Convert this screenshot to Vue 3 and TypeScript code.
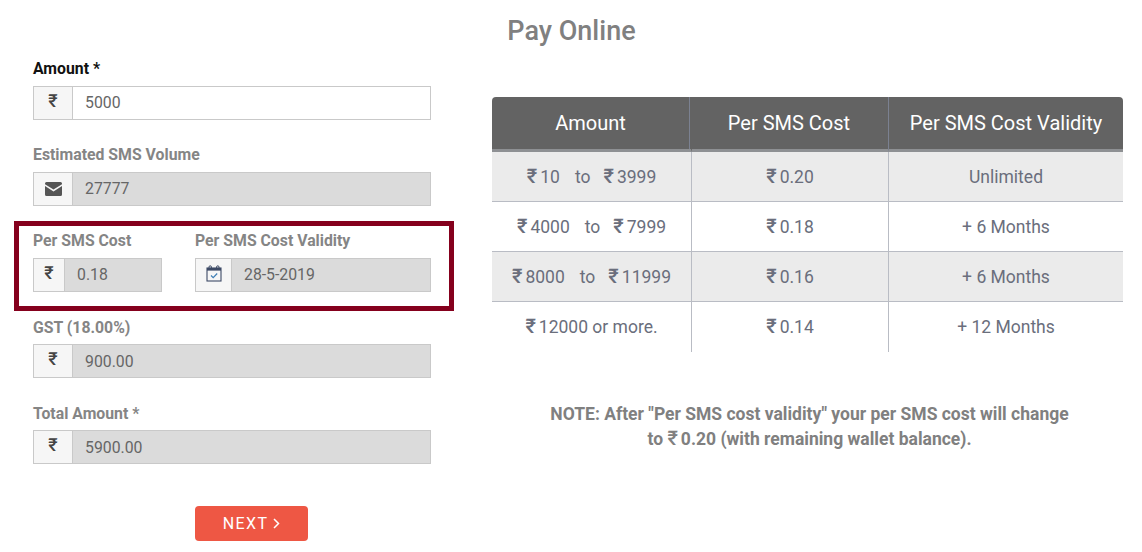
<script setup lang="ts">
interface Rate {
    from: string;
    to?: string;
    cost: string;
    validity: string;
}

const rates: Rate[] = [
    { from: '10', to: '3999', cost: '0.20', validity: 'Unlimited' },
    { from: '4000', to: '7999', cost: '0.18', validity: '+ 6 Months' },
    { from: '8000', to: '11999', cost: '0.16', validity: '+ 6 Months' },
    { from: '12000 or more.', cost: '0.14', validity: '+ 12 Months' },
];
</script>

<template>
    <main class="page">
        <h1 class="title">Pay Online</h1>
        <div class="columns">
            <form class="left" @submit.prevent>
                <div class="field">
                    <label class="dark">Amount *</label>
                    <div class="group">
                        <span class="addon wide rupee">₹</span>
                        <input class="control" value="5000" />
                    </div>
                </div>
                <div class="field volume">
                    <label>Estimated SMS Volume</label>
                    <div class="group">
                        <span class="addon wide">
                            <svg width="17" height="14" viewBox="0 0 17 14">
                                <path d="M1.5 0h14A1.5 1.5 0 0 1 17 1.5v.7L8.5 7.6 0 2.2v-.7A1.5 1.5 0 0 1 1.5 0z" fill="#555" />
                                <path d="M0 4l8.5 5.4L17 4v8.5a1.5 1.5 0 0 1-1.500 1.500h-14A1.500 1.500 0 0 1 0 12.500z" fill="#555" />
                            </svg>
                        </span>
                        <input class="control" value="27777" disabled />
                    </div>
                </div>
                <div class="highlight">
                    <div class="field cost">
                        <label>Per SMS Cost</label>
                        <div class="group">
                            <span class="addon narrow rupee">₹</span>
                            <input class="control" value="0.18" disabled />
                        </div>
                    </div>
                    <div class="field validity">
                        <label>Per SMS Cost Validity</label>
                        <div class="group">
                            <span class="addon medium calendar">
                                <svg width="16" height="17" viewBox="0 0 16 17" fill="none">
                                    <rect x="1" y="3" width="14" height="13" stroke="#3d4a66" stroke-width="1.100" />
                                    <rect x="1" y="3" width="14" height="2.600" fill="#3d4a66" />
                                    <path d="M3 3.500V2a1.200 1.200 0 0 1 2.400 0v1.500M10.600 3.500V2a1.200 1.200 0 0 1 2.400 0v1.500" stroke="#3d4a66" stroke-width="1" />
                                    <path d="M5 10.500l2.200 2.200L11.200 8.500" stroke="#3f7fb5" stroke-width="1.200" />
                                </svg>
                            </span>
                            <input class="control" value="28-5-2019" disabled />
                        </div>
                    </div>
                </div>
                <div class="field gst">
                    <label>GST (18.00%)</label>
                    <div class="group">
                        <span class="addon wide rupee">₹</span>
                        <input class="control" value="900.00" disabled />
                    </div>
                </div>
                <div class="field total">
                    <label>Total Amount *</label>
                    <div class="group">
                        <span class="addon wide rupee">₹</span>
                        <input class="control" value="5900.00" disabled />
                    </div>
                </div>
                <button class="next" type="submit">
                    NEXT
                    <svg width="7" height="11" viewBox="0 0 7 11" fill="none">
                        <path d="M1 1l4.500 4.500L1 10" stroke="#fff" stroke-width="1.500" />
                    </svg>
                </button>
            </form>
            <section class="right">
                <table class="rates">
                    <thead>
                        <tr>
                            <th>Amount</th>
                            <th>Per SMS Cost</th>
                            <th>Per SMS Cost Validity</th>
                        </tr>
                    </thead>
                    <tbody>
                        <tr v-for="rate in rates" :key="rate.from">
                            <td>
                                <template v-if="rate.to">
                                    <span class="rs">₹</span>{{ rate.from }}<span class="to">to</span><span class="rs">₹</span>{{ rate.to }}
                                </template>
                                <template v-else><span class="rs">₹</span>{{ rate.from }}</template>
                            </td>
                            <td><span class="rs">₹</span>{{ rate.cost }}</td>
                            <td>{{ rate.validity }}</td>
                        </tr>
                    </tbody>
                </table>
                <p class="note">
                    NOTE: After "Per SMS cost validity" your per SMS cost will change<br />
                    to <span class="rs">₹</span>0.20 (with remaining wallet balance).
                </p>
            </section>
        </div>
    </main>
</template>

<style scoped>
.page {
    width: 1142px;
    height: 552px;
    overflow: hidden;
    background: #fff;
    font-family: Roboto, "DejaVu Sans", sans-serif;
    box-sizing: border-box;
}

.title {
    margin: 0;
    height: 58px;
    padding: 14px 0 0 1px;
    box-sizing: border-box;
    text-align: center;
    font-size: 27px;
    line-height: 34px;
    font-weight: 500;
    color: #808080;
}

.columns {
    display: flex;
}

.left {
    width: 398px;
    margin-left: 33px;
    display: flex;
    flex-direction: column;
}

.field {
    display: flex;
    flex-direction: column;
    gap: 8px;
}

.field label {
    height: 20px;
    font-size: 15.8px;
    line-height: 22px;
    font-weight: 700;
    color: #858585;
    white-space: nowrap;
}

.field label.dark {
    color: #111;
}

.volume {
    margin-top: 24px;
}

.gst {
    margin-top: 6px;
    gap: 7px;
}

.total {
    margin-top: 25px;
    gap: 7px;
}

.gst .control,
.total .control {
    padding-bottom: 0;
}

.group {
    display: flex;
    height: 34px;
    border: 1px solid #c9c9c9;
    box-sizing: border-box;
}

.addon {
    flex: none;
    display: flex;
    align-items: center;
    justify-content: center;
    background: #f6f6f6;
    border-right: 1px solid #c9c9c9;
    box-sizing: border-box;
    color: #444;
}

.wide {
    width: 39px;
}

.narrow {
    width: 31px;
}

.medium {
    width: 36px;
}

.calendar {
    padding-bottom: 3px;
}

.rupee {
    font-size: 18px;
    font-weight: 500;
    padding-bottom: 5px;
}

.control {
    flex: 1;
    min-width: 0;
    width: 0;
    border: 0;
    padding: 0 12px 2px;
    margin: 0;
    font: 400 15.8px Roboto, sans-serif;
    color: #666;
    background: #fff;
    outline: none;
}

.control:disabled {
    background: #dbdbdb;
    color: #666;
    opacity: 1;
    -webkit-text-fill-color: #666;
}

.highlight {
    display: flex;
    gap: 33px;
    width: 440px;
    height: 90px;
    margin: 15px 0 0 -19px;
    padding: 4px 18px 0 14px;
    border: 5px solid #85001d;
    box-sizing: border-box;
}

.cost {
    width: 129px;
    flex: none;
}

.validity {
    flex: 1;
    min-width: 0;
}

.next {
    align-self: flex-start;
    display: flex;
    align-items: center;
    justify-content: center;
    gap: 5px;
    width: 113px;
    height: 35px;
    margin: 42px 0 0 162px;
    padding: 0;
    border: 0;
    border-radius: 4px;
    background: #ee5744;
    color: #fff;
    font: 400 16px Roboto, sans-serif;
    letter-spacing: 1.4px;
}

.right {
    width: 631px;
    margin: 39px 0 0 61px;
}

.rates {
    width: 631px;
    table-layout: fixed;
    border-collapse: separate;
    border-spacing: 0;
    text-align: center;
}

.rates th:nth-child(1),
.rates td:nth-child(1) {
    width: 200px;
}

.rates th:nth-child(2),
.rates td:nth-child(2) {
    width: 197px;
}

.rates th {
    height: 55px;
    padding: 0;
    background: #636363;
    border-bottom: 3px solid #8e9093;
    border-right: 1px solid #7b8191;
    box-sizing: border-box;
    color: #fff;
    font-size: 20px;
    font-weight: 400;
}

.rates th:first-child {
    padding-right: 2px;
    border-top-left-radius: 4px;
    border-right-color: #636363;
    background: linear-gradient(#7b8191, #7b8191) no-repeat 197px 0 / 1px 100%, #636363;
}

.rates th:nth-child(2) {
    padding-right: 2px;
}

.rates th:last-child {
    border-top-right-radius: 4px;
    border-right: 0;
}

.rates td {
    height: 50px;
    padding: 0;
    border-right: 1px solid #b9bcc4;
    border-bottom: 1px solid #b9bcc4;
    box-sizing: border-box;
    color: #6a6e7c;
    font-size: 17.5px;
    white-space: nowrap;
}

.rates td:last-child {
    border-right: 0;
}

.rates tbody tr:nth-child(odd) td {
    background: #ebebeb;
}

.rates tbody tr:last-child td {
    border-bottom: 0;
    padding-bottom: 1px;
}

.rs {
    font-size: 20px;
    font-weight: 500;
    margin-right: 3px;
    line-height: 1;
}

.to {
    margin: 0 13px 0 15px;
}

.note {
    margin: 50px 0 0;
    padding-left: 4px;
    text-align: center;
    font-size: 17.5px;
    line-height: 25px;
    font-weight: 700;
    color: #808080;
}
</style>
